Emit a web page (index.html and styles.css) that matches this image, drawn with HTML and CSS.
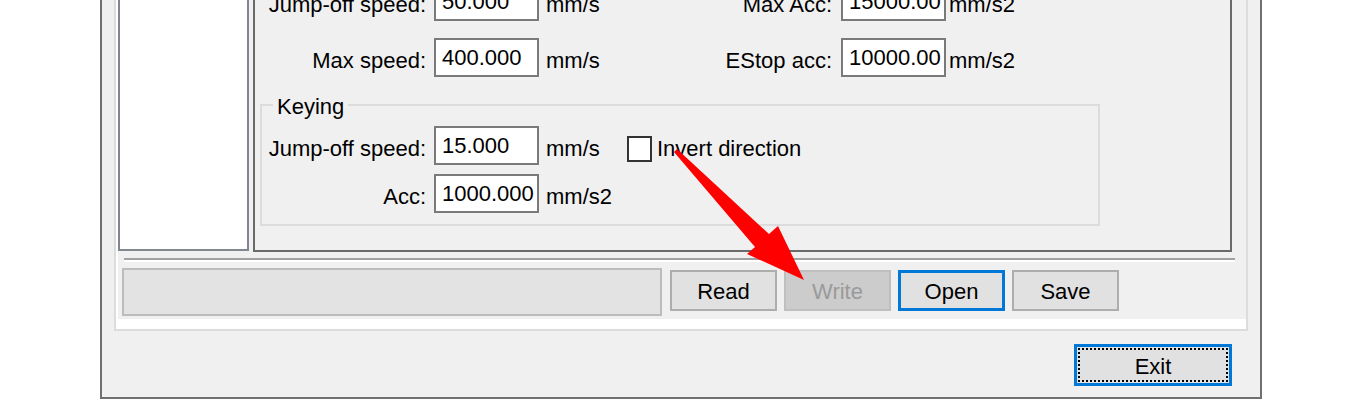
FILE: index.html
```html
<!DOCTYPE html>
<html>
<head>
<meta charset="utf-8">
<link rel="stylesheet" href="styles.css">
</head>
<body>
<div class="window">
  <div class="tabpage">
    <div class="panel">
      <div class="toprow">
        <div class="listbox"></div>
        <div class="main">
          <div class="row">
            <span class="lbl w1">Jump-off speed:</span>
            <span class="field">50.000</span>
            <span class="unit u1">mm/s</span>
            <span class="lbl w2">Max Acc:</span>
            <span class="field">15000.00</span>
            <span class="unit u2">mm/s2</span>
          </div>
          <div class="row row-b">
            <span class="lbl w1">Max speed:</span>
            <span class="field">400.000</span>
            <span class="unit u1">mm/s</span>
            <span class="lbl w2">EStop acc:</span>
            <span class="field">10000.00</span>
            <span class="unit u2">mm/s2</span>
          </div>
          <fieldset class="group">
            <legend class="legend">Keying</legend>
            <div class="row">
              <span class="lbl w3">Jump-off speed:</span>
              <span class="field">15.000</span>
              <span class="unit u3">mm/s</span>
              <span class="check"><span class="box"></span><span class="check-text">Invert direction</span></span>
            </div>
            <div class="row row-k2">
              <span class="lbl w3">Acc:</span>
              <span class="field">1000.000</span>
              <span class="unit u3">mm/s2</span>
            </div>
          </fieldset>
        </div>
      </div>
      <div class="sep"></div>
      <div class="bottomrow">
        <div class="status"></div>
        <div class="buttons">
          <button class="btn">Read</button>
          <button class="btn disabled">Write</button>
          <button class="btn default">Open</button>
          <button class="btn">Save</button>
        </div>
      </div>
    </div>
  </div>
  <div class="exitrow">
    <button class="btn exit"><span class="focus">Exit</span></button>
  </div>
</div>
<svg class="arrow" width="1362" height="400" viewBox="0 0 1362 400">
  <polygon points="677,149 769,234 778,226 804,280 747,254 755,247 674,152" fill="#ff0000"/>
</svg>
</body>
</html>
```

FILE: styles.css
```css
html, body {
  margin: 0;
  padding: 0;
}
body {
  width: 1362px;
  height: 400px;
  overflow: hidden;
  background: #ffffff;
  position: relative;
  font-family: "Liberation Sans", Arial, sans-serif;
  font-size: 22px;
  color: #000;
}
.window {
  margin-top: -34px;
  margin-left: 100px;
  width: 1162px;
  box-sizing: border-box;
  border: 2px solid #707070;
  background: #f0f0f0;
}
.tabpage {
  margin: 0 12px;
  border: 2px solid #dcdcdc;
  background: #ffffff;
  padding: 0 0 10px 2px;
}
.panel {
  background: #f0f0f0;
  padding-bottom: 3px;
}
.toprow {
  display: flex;
  align-items: stretch;
}
.listbox {
  width: 131px;
  box-sizing: border-box;
  border: 2px solid #82868e;
  background: #ffffff;
  margin-bottom: 1px;
}
.main {
  margin-left: 4px;
  width: 979px;
  box-sizing: border-box;
  border: 2px solid #6a6a6a;
  padding: 10px 0 24px 0;
}
.row {
  display: flex;
  align-items: center;
  height: 39px;
}
.row-b {
  margin-top: 17px;
}
.row-k2 {
  margin-top: 9px;
}
.lbl {
  text-align: right;
  white-space: nowrap;
  line-height: 24px;
  padding-top: 6px;
}
.w1 { width: 171px; margin-right: 8px; }
.w2 { width: 196px; margin-right: 9px; }
.w3 { width: 164px; margin-right: 8px; }
.field {
  width: 105px;
  height: 39px;
  box-sizing: border-box;
  border: 2px solid #7a7a7a;
  background: #ffffff;
  padding-left: 6px;
  line-height: 35px;
  white-space: nowrap;
  overflow: hidden;
}
.unit {
  white-space: nowrap;
  line-height: 24px;
  padding-top: 6px;
}
.u1 { margin-left: 7px; width: 90px; }
.u2 { margin-left: 3px; }
.u3 { margin-left: 7px; width: 81px; }
.group {
  margin: 16px 0 0 5px;
  width: 840px;
  box-sizing: border-box;
  border: 2px solid #dcdcdc;
  padding: 9px 0 11px 0;
  min-width: 0;
}
.legend {
  margin-left: 11px;
  padding: 4px 4px 0 4px;
  line-height: 20px;
}
.check {
  display: flex;
  align-items: center;
  margin-top: 7px;
}
.box {
  width: 25px;
  height: 26px;
  box-sizing: border-box;
  border: 2px solid #333333;
  background: #ffffff;
  margin-right: 5px;
}
.check-text {
  line-height: 24px;
  white-space: nowrap;
}
.sep {
  margin: 6px 11px 0 6px;
  border-top: 2px solid #a0a0a0;
  border-bottom: 2px solid #ffffff;
}
.bottomrow {
  display: flex;
  align-items: flex-start;
  margin-top: 6px;
  padding-left: 4px;
}
.status {
  width: 540px;
  height: 48px;
  box-sizing: border-box;
  border: 2px solid #bcbcbc;
  background: #e3e3e3;
}
.buttons {
  display: flex;
  gap: 7px;
  margin-left: 8px;
  margin-top: 2px;
}
.btn {
  width: 107px;
  height: 41px;
  box-sizing: border-box;
  border: 2px solid #adadad;
  background: #e1e1e1;
  font-family: "Liberation Sans", Arial, sans-serif;
  font-size: 22px;
  color: #000;
  padding: 2px 0 0 0;
  margin: 0;
  line-height: 24px;
}
.btn.disabled {
  background: #cccccc;
  border-color: #bfbfbf;
  color: #9a9a9a;
}
.btn.default {
  border: 3px solid #0078d7;
}
.exitrow {
  display: flex;
  justify-content: flex-end;
  padding: 13px 28px 11px 0;
}
.btn.exit {
  width: 158px;
  height: 42px;
  border: 3px solid #0078d7;
  padding: 1px;
  display: flex;
}
.focus {
  flex: 1;
  border: 2px dotted #000;
  display: flex;
  align-items: center;
  justify-content: center;
  padding-top: 3px;
}
.arrow {
  position: absolute;
  left: 0;
  top: 0;
  pointer-events: none;
}
```
